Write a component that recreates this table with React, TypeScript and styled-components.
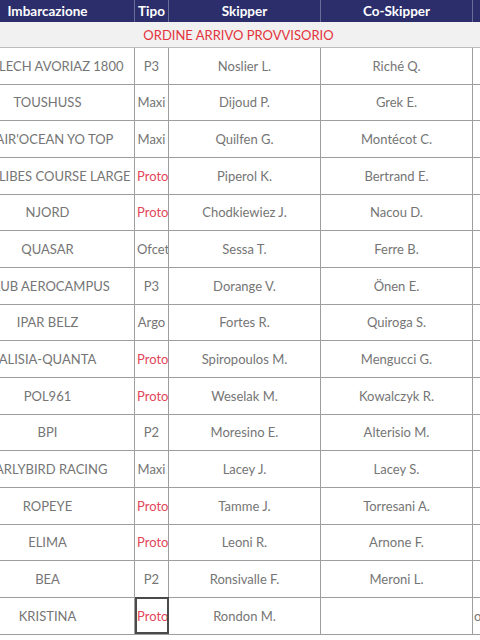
import React from "react";
import styled, { createGlobalStyle } from "styled-components";

const GlobalStyle = createGlobalStyle`
  html, body {
    margin: 0;
    padding: 0;
    background: #ffffff;
    overflow: hidden;
  }
  body {
    font-family: Lato, "Open Sans", "Noto Sans", sans-serif;
  }
`;

const Page = styled.div`
  width: 480px;
  height: 640px;
  overflow: hidden;
`;

// the table is wider than the window and scrolled a little to the right
const Scroller = styled.div`
  margin-left: -40px;
`;

const Table = styled.table`
  border-collapse: collapse;
  table-layout: fixed;
  width: 556px;
  font-size: 13px;
  color: #757575;
`;

const HeadCell = styled.th`
  background: #2c2e6c;
  color: #ffffff;
  font-weight: 700;
  font-size: 13.5px;
  height: 22px;
  padding: 0;
  text-align: center;
  border-left: 1px solid #6a6c98;
  white-space: nowrap;
  overflow: hidden;
`;

const TitleCell = styled.td`
  background: #f1f1f1;
  color: #e4333c;
  height: 25px;
  padding: 0;
  text-align: center;
  font-size: 13px;
  border-bottom: 1px solid #bdbdbd;
`;

const Row = styled.tr`
  height: 36.67px;
`;

const Cell = styled.td<{ $red?: boolean; $marked?: boolean }>`
  padding: 0 2px;
  text-align: center;
  border: 1px solid #9e9e9e;
  white-space: nowrap;
  overflow: hidden;
  color: ${(p) => (p.$red ? "#e2475a" : "#757575")};
  outline: ${(p) => (p.$marked ? "2px solid #4a4a4a" : "none")};
  outline-offset: -2px;
`;

const TailCell = styled(Cell)`
  text-align: left;
  padding: 0 1px;
`;

interface Entry {
  boat: string;
  tipo: string;
  skipper: string;
  coSkipper: string;
  tail?: string;
  marked?: boolean;
}

const entries: Array<Entry> = [
  { boat: "MALLECH AVORIAZ 1800", tipo: "P3", skipper: "Noslier L.", coSkipper: "Riché Q." },
  { boat: "TOUSHUSS", tipo: "Maxi", skipper: "Dijoud P.", coSkipper: "Grek E." },
  { boat: "FLAIR'OCEAN YO TOP", tipo: "Maxi", skipper: "Quilfen G.", coSkipper: "Montécot C." },
  { boat: "CARALIBES COURSE LARGE", tipo: "Proto", skipper: "Piperol K.", coSkipper: "Bertrand E." },
  { boat: "NJORD", tipo: "Proto", skipper: "Chodkiewiez J.", coSkipper: "Nacou D." },
  { boat: "QUASAR", tipo: "Ofcet", skipper: "Sessa T.", coSkipper: "Ferre B." },
  { boat: "CLUB AEROCAMPUS", tipo: "P3", skipper: "Dorange V.", coSkipper: "Önen E." },
  { boat: "IPAR BELZ", tipo: "Argo", skipper: "Fortes R.", coSkipper: "Quiroga S." },
  { boat: "ALISIA-QUANTA", tipo: "Proto", skipper: "Spiropoulos M.", coSkipper: "Mengucci G." },
  { boat: "POL961", tipo: "Proto", skipper: "Weselak M.", coSkipper: "Kowalczyk R." },
  { boat: "BPI", tipo: "P2", skipper: "Moresino E.", coSkipper: "Alterisio M." },
  { boat: "EARLYBIRD RACING", tipo: "Maxi", skipper: "Lacey J.", coSkipper: "Lacey S." },
  { boat: "ROPEYE", tipo: "Proto", skipper: "Tamme J.", coSkipper: "Torresani A." },
  { boat: "ELIMA", tipo: "Proto", skipper: "Leoni R.", coSkipper: "Arnone F." },
  { boat: "BEA", tipo: "P2", skipper: "Ronsivalle F.", coSkipper: "Meroni L." },
  { boat: "KRISTINA", tipo: "Proto", skipper: "Rondon M.", coSkipper: "", tail: "o", marked: true },
];

const App = () => {
  return (
    <Page>
      <GlobalStyle />
      <Scroller>
        <Table>
          <colgroup>
            <col style={{ width: 174 }} />
            <col style={{ width: 34 }} />
            <col style={{ width: 152 }} />
            <col style={{ width: 152 }} />
            <col style={{ width: 44 }} />
          </colgroup>
          <thead>
            <tr>
              <HeadCell>Imbarcazione</HeadCell>
              <HeadCell>Tipo</HeadCell>
              <HeadCell>Skipper</HeadCell>
              <HeadCell>Co-Skipper</HeadCell>
              <HeadCell></HeadCell>
            </tr>
          </thead>
          <tbody>
            <tr>
              <TitleCell colSpan={5}>ORDINE ARRIVO PROVVISORIO</TitleCell>
            </tr>
            {entries.map((e) => (
              <Row key={e.boat}>
                <Cell>{e.boat}</Cell>
                <Cell $red={e.tipo === "Proto"} $marked={e.marked}>
                  {e.tipo}
                </Cell>
                <Cell>{e.skipper}</Cell>
                <Cell>{e.coSkipper}</Cell>
                <TailCell>{e.tail}</TailCell>
              </Row>
            ))}
          </tbody>
        </Table>
      </Scroller>
    </Page>
  );
};

export default App;
